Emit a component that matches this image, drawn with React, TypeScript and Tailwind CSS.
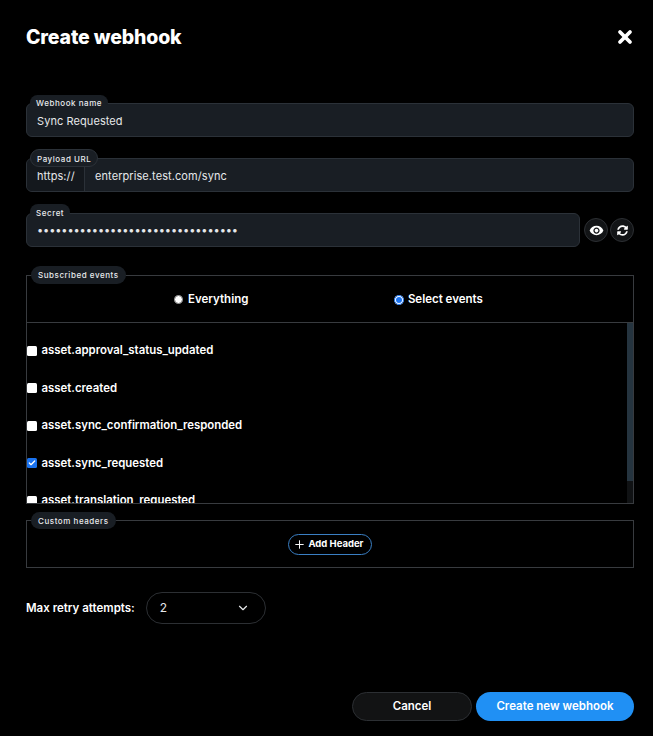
import { Check, ChevronDown, Plus, X } from 'lucide-react';
import { FaSyncAlt } from 'react-icons/fa';
import { MdVisibility } from 'react-icons/md';

const events = [
  { name: 'asset.approval_status_updated', checked: false },
  { name: 'asset.created', checked: false },
  { name: 'asset.sync_confirmation_responded', checked: false },
  { name: 'asset.sync_requested', checked: true },
  { name: 'asset.translation_requested', checked: false },
];

function FieldLabel({ children, className }: { children: string; className: string }) {
  return (
    <span
      className={`absolute z-10 flex items-center rounded-full bg-[#191e24] text-[8px] font-medium tracking-[0.55px] text-[#e8eaed] ${className}`}
    >
      {children}
    </span>
  );
}

export default function App() {
  return (
    <div className="flex h-[736px] w-[653px] flex-col overflow-hidden bg-black pl-[26px] pr-[19px] font-['Inter',sans-serif] text-white">
      <div className="mt-[25px] flex h-[24px] items-center justify-between">
        <h1 className="pt-[2px] text-[19.5px] font-extrabold leading-none tracking-[-0.15px]">Create webhook</h1>
        <X size={20} strokeWidth={4.5} className="-mr-px" />
      </div>

      <div className="relative mt-[54px]">
        <FieldLabel className="-top-[8px] left-[4px] h-[15px] px-[6px]">Webhook name</FieldLabel>
        <div className="flex h-[34px] items-center rounded-md border border-[#2b3138] bg-[#191e24] pl-[10px] pt-[2px] text-[11px] tracking-[0.08px] text-[#e6e8ea]">
          Sync Requested
        </div>
      </div>

      <div className="relative mt-[21px]">
        <FieldLabel className="-top-[9px] left-[4px] h-[18px] border border-[#2b3138] px-[6px] pt-px">Payload URL</FieldLabel>
        <div className="flex h-[34px] items-stretch overflow-hidden rounded-md border border-[#2b3138] bg-[#191e24] text-[11px] tracking-[0.08px] text-[#e6e8ea]">
          <div className="flex w-[58px] items-center border-r border-[#2b3138] bg-[#14181d] pl-[10px] pt-[2px]">https://</div>
          <div className="flex items-center pl-[10px] pt-[2px]">enterprise.test.com/sync</div>
        </div>
      </div>

      <div className="mt-[21px] flex items-center">
        <div className="relative flex-1">
          <FieldLabel className="-top-[9px] left-[4px] h-[16px] px-[6px] pt-px">Secret</FieldLabel>
          <div className="flex h-[34px] items-center rounded-md border border-[#2b3138] bg-[#191e24] pl-[10px] text-[11px] tracking-[-0.1px] text-[#e6e8ea]">
            {'•'.repeat(33)}
          </div>
        </div>
        <button className="ml-[4px] flex h-[24px] w-[24px] items-center justify-center rounded-full border border-[#2c2f33] bg-[#121416]">
          <MdVisibility size={15} />
        </button>
        <button className="ml-[2px] flex h-[24px] w-[24px] items-center justify-center rounded-full border border-[#2c2f33] bg-[#121416]">
          <FaSyncAlt size={11} />
        </button>
      </div>

      <div className="relative mt-[28px] border border-[#383b3f]">
        <FieldLabel className="-top-[10px] left-[4px] h-[18px] px-[7px]">Subscribed events</FieldLabel>
        <div className="flex h-[47px] items-center border-b border-[#383b3f] pt-[1px] text-[11.5px] font-semibold">
          <label className="ml-[147px] flex items-center gap-[5px]">
            <input type="radio" name="scope" className="m-0 h-[9px] w-[9px]" />
            Everything
          </label>
          <label className="ml-[146px] flex items-center gap-[3.5px]">
            <input type="radio" name="scope" defaultChecked className="m-0 h-[10px] w-[10px] accent-[#1a73f0]" />
            Select events
          </label>
        </div>
        <div className="relative h-[180px] overflow-hidden pt-[9px]">
          {events.map((ev) => (
            <div key={ev.name} className="flex h-[37.5px] items-center gap-[4.5px] text-[11.4px] font-semibold">
              <span
                className={`flex h-[10px] w-[10px] items-center justify-center rounded-[1.5px] ${ev.checked ? 'bg-[#1a73f0]' : 'bg-white'}`}
              >
                {ev.checked && <Check size={8} strokeWidth={4} />}
              </span>
              {ev.name}
            </div>
          ))}
          <div className="absolute bottom-0 right-0 top-0 w-[6px] bg-[#101214]">
            <div className="h-[158px] bg-[#25343f]" />
          </div>
        </div>
      </div>

      <div className="relative mt-[16px] flex h-[48px] items-center justify-center border border-[#383b3f]">
        <FieldLabel className="-top-[9px] left-[4px] h-[17px] px-[7px]">Custom headers</FieldLabel>
        <button className="flex h-[21px] items-center gap-[2.5px] rounded-full border border-[#3a7fc4] pl-[4.5px] pr-[8px] text-[9.5px] font-bold">
          <Plus size={13} strokeWidth={1.8} />
          Add Header
        </button>
      </div>

      <div className="mt-[24px] flex items-center">
        <span className="pt-[2px] text-[11.5px] font-semibold">Max retry attempts:</span>
        <div className="ml-[11px] flex h-[32px] w-[120px] items-center justify-between rounded-full border border-[#2c2f33] pl-[13px] pr-[15px] text-[12px] text-[#e6e8ea]">
          2
          <ChevronDown size={14} strokeWidth={2} />
        </div>
      </div>

      <div className="mt-[68px] flex justify-end gap-[4px]">
        <button className="h-[29px] w-[120px] rounded-full border border-[#2c2f33] bg-[#121314] text-[11.5px] font-semibold">Cancel</button>
        <button className="h-[29px] w-[158px] rounded-full bg-[#2090f4] text-[11.5px] font-semibold">Create new webhook</button>
      </div>
    </div>
  );
}
